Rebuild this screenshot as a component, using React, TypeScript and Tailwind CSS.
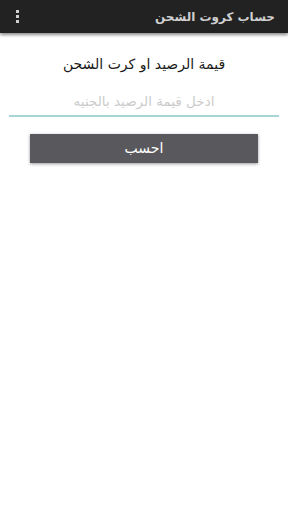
import React from 'react';

export default function App() {
  return (
    <div dir="rtl" className="w-[288px] h-[512px] bg-white overflow-hidden" style={{ fontFamily: '"DejaVu Sans", sans-serif' }}>
      <div className="h-[33px] bg-[#222222] flex items-center justify-between pr-[13px] pl-[16px] shadow-[0_2px_3px_rgba(0,0,0,0.45)]">
        <span className="text-[12px] text-[#cfcfcf] font-bold">حساب كروت الشحن</span>
        <div className="flex flex-col gap-[2px]">
          <span className="w-[3px] h-[3px] bg-[#cfcfcf]" />
          <span className="w-[3px] h-[3px] bg-[#cfcfcf]" />
          <span className="w-[3px] h-[3px] bg-[#cfcfcf]" />
        </div>
      </div>
      <div className="flex flex-col items-center pt-[21px]">
        <div className="text-[14px] text-[#1a1a1a]">قيمة الرصيد او كرت الشحن</div>
        <div className="mt-[16px] w-[270px] border-b-2 border-[#a6d6d6] pb-[4px] text-center text-[13.5px] text-[#cccccc]">
          ادخل قيمة الرصيد بالجنيه
        </div>
        <div className="mt-[17px] w-[228px] h-[29px] bg-[#59595d] shadow-[0_1px_3px_rgba(0,0,0,0.4)] flex items-center justify-center text-[14px] text-white">
          احسب
        </div>
      </div>
    </div>
  );
}
